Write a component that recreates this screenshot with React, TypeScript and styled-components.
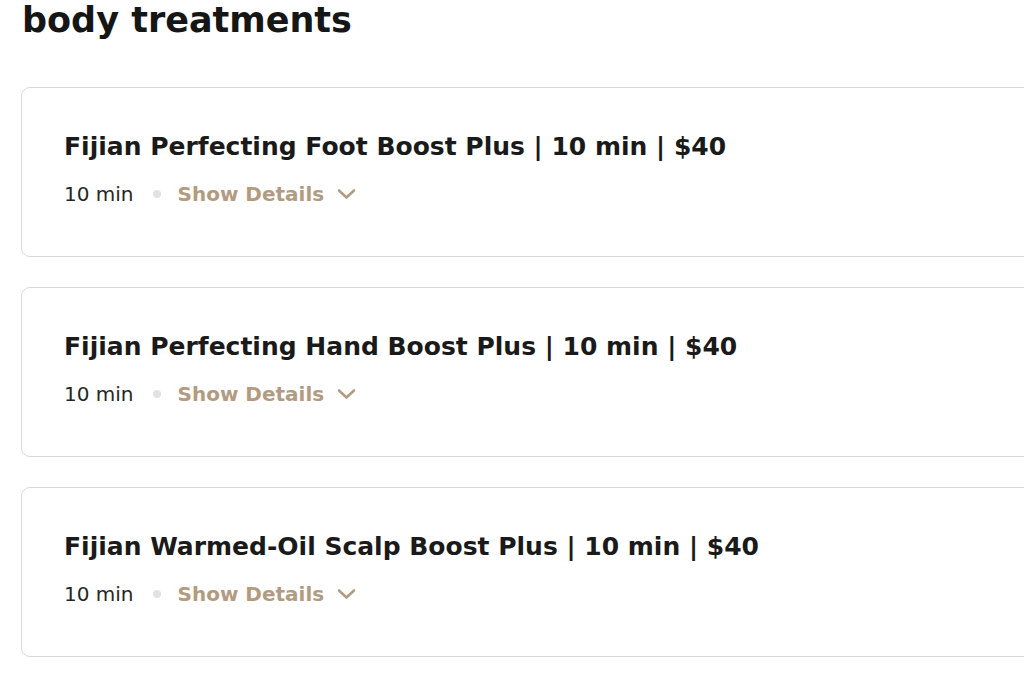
import React from "react";
import styled, { createGlobalStyle } from "styled-components";

const Global = createGlobalStyle`
  html, body { margin: 0; padding: 0; background: #ffffff; overflow: hidden; }
  body { font-family: "DejaVu Sans", "Open Sans", sans-serif; color: #1c1c1c; }
`;

const Page = styled.div`
  width: 1024px;
  height: 683px;
  overflow: hidden;
  padding-left: 21px;
  box-sizing: border-box;
`;

const Heading = styled.h1`
  margin: -4px 0 0 1px;
  font-size: 35px;
  font-weight: 700;
  line-height: 48px;
  color: #161616;
`;

const List = styled.div`
  display: flex;
  flex-direction: column;
  gap: 30px;
  margin-top: 43px;
`;

const Card = styled.div`
  width: 1100px;
  height: 170px;
  box-sizing: border-box;
  border: 1.5px solid #d9d9d9;
  border-radius: 9px;
  padding: 43px 42px 0;
  background: #fff;
`;

const Title = styled.div`
  font-size: 25px;
  font-weight: 700;
  line-height: 32px;
  color: #1a1a1a;
`;

const Meta = styled.div`
  display: flex;
  align-items: center;
  margin-top: 17px;
  font-size: 20px;
  line-height: 28px;
`;

const Duration = styled.span`
  color: #262626;
  font-weight: 400;
`;

const Dot = styled.span`
  width: 8px;
  height: 8px;
  border-radius: 50%;
  background: #e2e2e2;
  margin: 0 17px 0 19px;
`;

const Details = styled.button`
  display: flex;
  align-items: center;
  gap: 13px;
  border: none;
  background: none;
  padding: 0;
  font: inherit;
  font-weight: 700;
  color: #b39b80;
  cursor: pointer;
`;

const Chevron = () => (
  <svg width="19" height="12" viewBox="0 0 19 12" fill="none">
    <path d="M2 2.5 L9.5 9.5 L17 2.5" stroke="#b39b80" strokeWidth="2.6" strokeLinecap="round" strokeLinejoin="round" />
  </svg>
);

const items = [
  "Fijian Perfecting Foot Boost Plus | 10 min | $40",
  "Fijian Perfecting Hand Boost Plus | 10 min | $40",
  "Fijian Warmed-Oil Scalp Boost Plus | 10 min | $40",
];

export default function App() {
  return (
    <Page>
      <Global />
      <Heading>body treatments</Heading>
      <List>
        {items.map((t) => (
          <Card key={t}>
            <Title>{t}</Title>
            <Meta>
              <Duration>10 min</Duration>
              <Dot />
              <Details>
                Show Details
                <Chevron />
              </Details>
            </Meta>
          </Card>
        ))}
      </List>
    </Page>
  );
}
